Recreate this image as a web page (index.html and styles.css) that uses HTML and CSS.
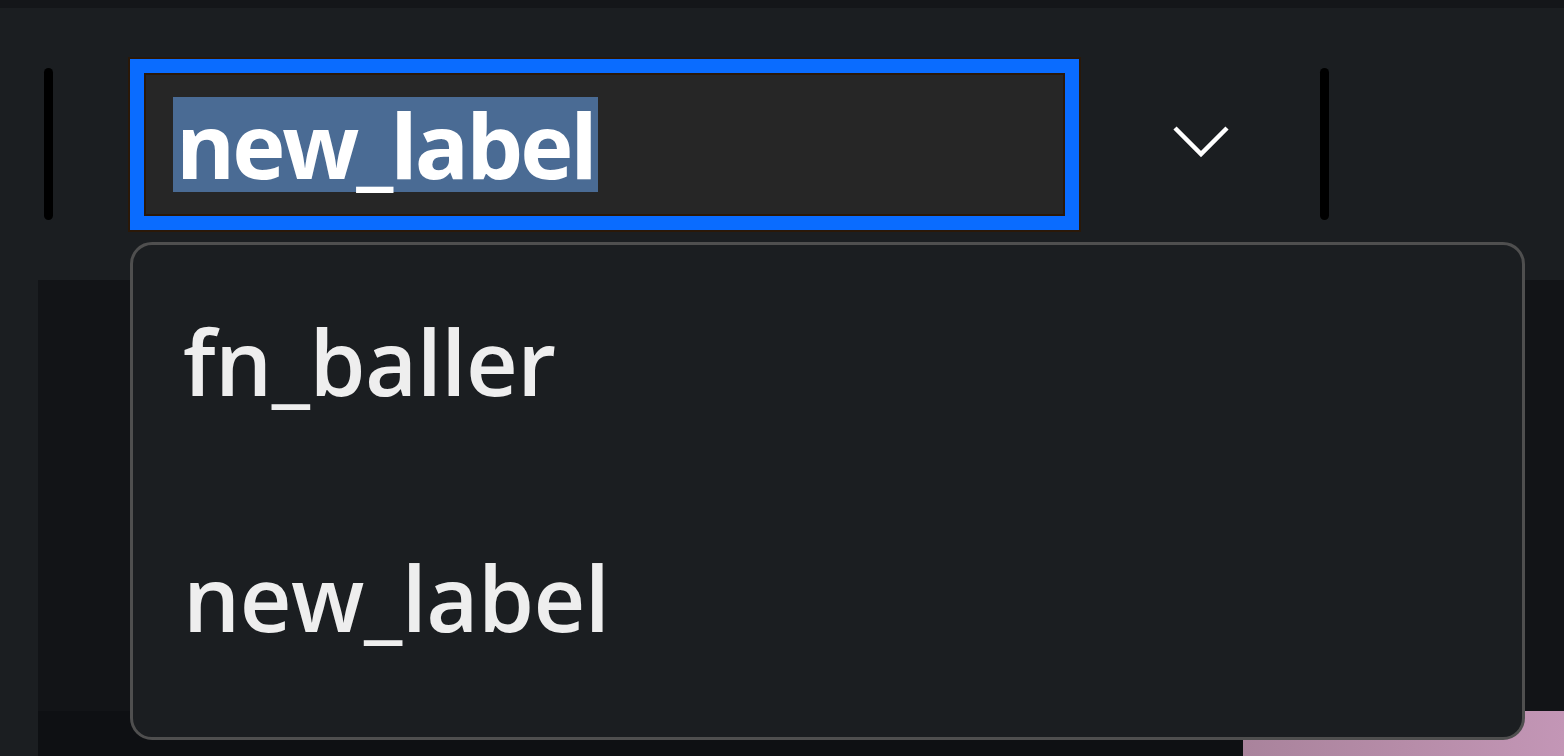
FILE: index.html
```html
<!DOCTYPE html>
<html>
<head>
<meta charset="utf-8">
<link rel="stylesheet" href="styles.css">
</head>
<body>
<div class="topstrip"></div>
<div class="toolbar">
  <div class="vbar"></div>
  <div class="combo">
    <span class="sel">new_label</span>
  </div>
  <div class="chevbtn">
    <svg width="60" height="36" viewBox="0 0 60 36"><polyline points="4,5 30,31 56,5" fill="none" stroke="#ffffff" stroke-width="4.5"/></svg>
  </div>
  <div class="vbar"></div>
</div>
<div class="panel">
  <div class="bottomrow">
    <div class="pink"></div>
  </div>
</div>
<div class="menu">
  <div class="item">fn_baller</div>
  <div class="item">new_label</div>
</div>
</body>
</html>
```
FILE: styles.css
```css
html, body {
  margin: 0;
  padding: 0;
}
body {
  width: 1564px;
  height: 756px;
  overflow: hidden;
  background: #1b1e21;
  font-family: "Open Sans", "Noto Sans", sans-serif;
  position: relative;
}
.topstrip {
  height: 8px;
  background: #141619;
}
.toolbar {
  height: 272px;
  display: flex;
  align-items: center;
  padding-left: 44px;
}
.vbar {
  width: 9px;
  height: 152px;
  border-radius: 5px;
  background: #000000;
}
.combo {
  margin-left: 77px;
  width: 949px;
  height: 171px;
  box-sizing: border-box;
  border: 14px solid #0a6cff;
  background: #262626;
  box-shadow: 0 0 0 2px #2a1808, inset 0 0 0 2px #2a1808;
  display: flex;
  align-items: center;
  padding-left: 29px;
}
.sel {
  display: inline-block;
  height: 95px;
  line-height: 95px;
  padding: 0 3px;
  background: #4a6b94;
  color: #ffffff;
  font-size: 90px;
  font-weight: 700;
  letter-spacing: -3px;
}
.chevbtn {
  width: 241px;
  height: 171px;
  display: flex;
  align-items: center;
  justify-content: center;
  padding-left: 2px;
  box-sizing: border-box;
}
.chevbtn svg {
  margin-top: -6px;
}
.panel {
  margin-left: 38px;
  height: 476px;
  background: #121417;
  display: flex;
  flex-direction: column;
  justify-content: flex-end;
}
.bottomrow {
  height: 45px;
  display: flex;
  background: #0e1013;
}
.pink {
  margin-left: auto;
  width: 321px;
  background: linear-gradient(90deg, #a9839c 0%, #b68ca8 50%, #c396b6 100%);
}
.menu {
  position: absolute;
  left: 130px;
  top: 242px;
  width: 1395px;
  height: 498px;
  box-sizing: border-box;
  border: 3px solid #4f4f4f;
  border-radius: 22px;
  background: #1b1e21;
}
.item {
  height: 236px;
  line-height: 232px;
  padding-left: 50px;
  color: #eeeeee;
  font-size: 90px;
  font-weight: 600;
  letter-spacing: -0.5px;
}
```
